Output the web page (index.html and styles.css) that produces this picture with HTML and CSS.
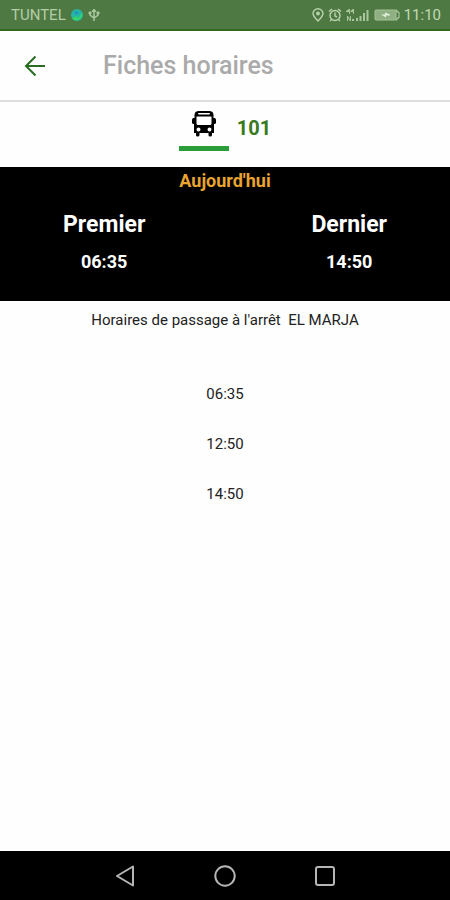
FILE: index.html
```html
<!DOCTYPE html>
<html lang="fr">
<head>
<meta charset="utf-8">
<meta name="viewport" content="width=device-width, initial-scale=1">
<title>Fiches horaires</title>
<link rel="stylesheet" href="styles.css">
</head>
<body>
<div class="status">
  <div class="status-group">
    <span>TUNTEL</span>
    <svg width="12" height="12" viewBox="0 0 12 12"><circle cx="6" cy="6" r="6" fill="#25b5a5"/><path d="M1 9L5 7L7 9L11 4A6 6 0 0 1 3 11Z" fill="#35d46c"/><path d="M3 3L6 2L8 4L5 6Z" fill="#2398bd"/></svg>
    <svg width="12" height="16" viewBox="0 0 12 16" fill="none" stroke="#a9c69d" stroke-width="1.5"><path d="M6 3V14M2 6V8L6 11L10 8V6"/><path d="M6 2L8 4.500H4ZM1 5H3V7H1ZM9 5H11V7H9Z" fill="#a9c69d" stroke-width="1"/></svg>
  </div>
  <div class="status-group status-right">
    <svg width="12" height="14" viewBox="0 0 12 14" fill="none" stroke="#b9d3ae" stroke-width="1.4"><path d="M6 13C3 10 1 8 1 5.500A5 4.700 0 0 1 11 5.500C11 8 9 10 6 13Z"/><circle cx="6" cy="5.500" r="1.200" fill="#b9d3ae"/></svg>
    <svg width="14" height="14" viewBox="0 0 14 14" fill="none" stroke="#b9d3ae" stroke-width="1.4"><circle cx="7" cy="7.500" r="5"/><path d="M1 3.500L4 1M13 3.500L10 1M7 4.500V8L9 9M3.500 11.500L2 13M10.500 11.500L12 13"/></svg>
    <svg width="24" height="14" viewBox="0 0 24 14" fill="#a9c69d"><path d="M3 1H4V6H3V4H0V3ZM7 1H8V6H7V4H4.500V3ZM1 8H2L4 11V8H5V13H4L2 10V13H1ZM6 11H8V13H6ZM10 10H12V13H10ZM13.500 8H15.500V13H13.500ZM17 5H19V13H17ZM20.500 2H22.500V13H20.500Z"/></svg>
    <svg width="26" height="12" viewBox="0 0 26 12"><rect x="1" y="1" width="21" height="10" rx="1" fill="#8fb082" stroke="#a5c398"/><path d="M22 1H23V3H25V9H23V11H22" stroke="#b9d3ae" fill="none"/><path d="M7 5.500H11V3.500L16 5.500V6.500H12V8.500Z" fill="#e3f0dc"/></svg>
    <span>11:10</span>
  </div>
</div>
<header class="app-bar">
  <button class="back" aria-label="Retour">
    <svg width="22" height="22" viewBox="0 0 22 22" fill="none" stroke="#286b21" stroke-width="2"><path d="M21 11H2M11.500 1.500L2 11L11.500 20.500"/></svg>
  </button>
  <h1>Fiches horaires</h1>
</header>
<nav class="line">
  <a class="tab" href="#horaires" aria-label="Bus 101">
    <svg width="24" height="26" viewBox="0 0 24 26"><path fill-rule="evenodd" d="M7 0H17Q21.500 0 21.500 4V7H22.500Q24 7 24 9V12Q24 13 22 13V22H20V24Q20 25.500 18.200 25.500T16.500 24V22H7.500V24Q7.500 25.500 5.700 25.500T4 24V22H2V13Q0 13 0 12V9Q0 7 1.500 7H2.500V4Q2.500 0 7 0ZM6.500 2Q5.500 2.700 6.500 3.400H17.500Q18.500 2.700 17.500 2ZM4.500 5.500V12.500Q4.500 14 6 14H18Q19.500 14 19.500 12.500V5.500ZM6.500 16.500A2 2 0 1 0 6.500 20.500A2 2 0 1 0 6.500 16.500ZM17.500 16.500A2 2 0 1 0 17.500 20.500A2 2 0 1 0 17.500 16.500Z"/></svg>
  </a>
  <span class="line-number">101</span>
</nav>
<section class="today">
  <h2>Aujourd'hui</h2>
  <dl class="bounds">
    <div><dt>Premier</dt><dd>06:35</dd></div>
    <div><dt>Dernier</dt><dd>14:50</dd></div>
  </dl>
</section>
<main id="horaires">
  <p class="stop">Horaires de passage à l'arrêt&nbsp; EL MARJA</p>
  <ul class="times">
    <li>06:35</li>
    <li>12:50</li>
    <li>14:50</li>
  </ul>
</main>
<footer class="system-nav">
  <button aria-label="Précédent"><svg width="22" height="22" viewBox="0 0 22 22"><path d="M19 1.500V20.500L3 11Z"/></svg></button>
  <button aria-label="Accueil"><svg width="22" height="22" viewBox="0 0 22 22"><circle cx="11" cy="11" r="9.700"/></svg></button>
  <button aria-label="Applications récentes"><svg width="22" height="22" viewBox="0 0 22 22"><rect x="2" y="2" width="18" height="18" rx="2"/></svg></button>
</footer>
</body>
</html>
```
FILE: styles.css
```css
* { box-sizing: border-box; margin: 0; padding: 0; }
body {
  min-height: 100vh;
  display: flex;
  flex-direction: column;
  background: #fefefe;
  color: #222;
  font-family: Roboto, "Liberation Sans", sans-serif;
}
svg { display: block; flex: none; }
button { border: 0; background: none; }
.status {
  height: 31px;
  padding: 0 9px 0 11px;
  display: flex;
  align-items: center;
  justify-content: space-between;
  background: #4f7942;
  border-bottom: 2px solid #34671f;
  color: #b4cda9;
  font-size: 15px;
}
.status-group { display: flex; align-items: center; gap: 4px; }
.status-group:first-child { gap: 5px; }
.status-right { color: #c2d9b8; }
.app-bar {
  height: 71px;
  padding-left: 24px;
  display: flex;
  align-items: center;
  gap: 57px;
  border-bottom: 2px solid #dedede;
}
.back { width: 22px; height: 24px; }
h1 { color: #aaa; font-size: 25px; font-weight: 500; line-height: 30px; }
.line { height: 65px; display: flex; justify-content: center; gap: 8px; }
.tab {
  width: 50px;
  height: 49px;
  padding-top: 9px;
  display: flex;
  justify-content: center;
  border-bottom: 5px solid #2a9d3a;
}
.line-number { color: #387a1e; font-size: 20px; font-weight: 700; line-height: 52px; }
.today { height: 134px; background: #000; color: #fff; text-align: center; }
h2 { color: #e9a52f; font-size: 18px; font-weight: 700; line-height: 28px; }
.bounds { padding: 14px 63px 0; display: flex; justify-content: space-between; font-weight: 700; }
dt { font-size: 23px; line-height: 32px; }
dd { padding-top: 6px; font-size: 18px; line-height: 30px; }
main { flex: 1; text-align: center; font-size: 15px; }
.stop { line-height: 38px; }
.times { padding-top: 30px; list-style: none; }
.times li { line-height: 50px; }
.system-nav {
  height: 49px;
  display: flex;
  align-items: center;
  justify-content: center;
  gap: 78px;
  background: #000;
}
.system-nav button { width: 22px; height: 22px; }
.system-nav svg { fill: none; stroke: #b5b5b5; stroke-width: 2; stroke-linejoin: round; }
```
